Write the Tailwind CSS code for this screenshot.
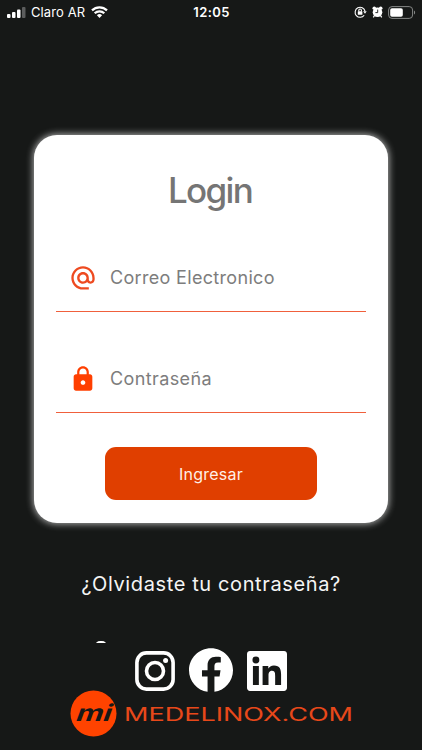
<!DOCTYPE html>
<html lang="es">
  <head>
    <meta charset="utf-8">
    <meta name="viewport" content="width=device-width, initial-scale=1.0">
    <title>Login - Medelinox</title>
    <script src="https://cdn.jsdelivr.net/npm/@tailwindcss/browser@4"></script>
  </head>

  <body class="flex h-[750px] w-[422px] flex-col overflow-hidden bg-[#161817] font-['Inter',sans-serif]">

    <!-- Status bar -->
    <header class="grid h-6 shrink-0 grid-cols-3 items-center pl-[7px] pr-[6px] text-white">
      <div class="flex items-center">
        <svg class="mr-[5px] h-[11px] w-[19px]" viewBox="0 0 19 11" fill="currentColor">
          <rect x="0" y="7" width="3.5" height="4" rx="1"/>
          <rect x="5" y="5" width="3.5" height="6" rx="1"/>
          <rect x="10" y="2.5" width="3.5" height="8.5" rx="1"/>
          <rect x="15" y="0" width="3.5" height="11" rx="1" opacity=".3"/>
        </svg>
        <span class="whitespace-nowrap text-[13px] leading-none tracking-[0.1px]">Claro AR</span>
        <svg class="ml-[6px] h-[12px] w-[17px]" viewBox="0 0 17 12" fill="none" stroke="currentColor" stroke-width="2.2">
          <path d="M1 4.4a10.7 10.7 0 0 1 15 0"/>
          <path d="M3.7 7.3a6.9 6.9 0 0 1 9.6 0"/>
          <path d="M8.5 12 5.9 9.3a3.8 3.8 0 0 1 5.2 0z" fill="currentColor" stroke="none"/>
        </svg>
      </div>
      <span class="text-center text-[13px] font-semibold leading-none tracking-[0.4px]">12:05</span>
      <div class="flex items-center justify-end">
        <svg class="mr-[5px] h-[12px] w-[13px]" viewBox="0 0 13 12" fill="none" stroke="currentColor" stroke-width="1.1">
          <path d="M10.2 9.2A5 5 0 1 1 11 5.2"/>
          <path d="m9.1 5.3 1.9 2.4 1.7-2.4z" fill="currentColor" stroke="none"/>
          <rect x="3.8" y="5.3" width="4.6" height="3.4" rx=".5" fill="currentColor" stroke="none"/>
          <path d="M4.8 5.5V4.3a1.3 1.3 0 0 1 2.6 0v1.2"/>
        </svg>
        <svg class="mr-[5px] h-[12px] w-[11px]" viewBox="0 0 11 12">
          <circle cx="2.3" cy="2.3" r="1.8" fill="#fff"/>
          <circle cx="8.7" cy="2.3" r="1.8" fill="#fff"/>
          <path d="m2.5 9.5-1.2 1.8M8.5 9.5l1.2 1.8" stroke="#fff" stroke-width="1.3"/>
          <circle cx="5.5" cy="6.3" r="4.8" fill="#fff"/>
          <path d="M5.7 3.6v3H3.4" fill="none" stroke="#161817" stroke-width=".9"/>
        </svg>
        <svg class="h-[13px] w-[28px]" viewBox="0 0 28 13">
          <rect x=".6" y=".6" width="24" height="11.8" rx="3.4" fill="none" stroke="#858786" stroke-width="1"/>
          <rect x="2.2" y="2.2" width="12.6" height="8.6" rx="1.8" fill="#fff"/>
          <path d="M26 4.5c1.5.6 1.5 3.4 0 4z" fill="#858786"/>
        </svg>
      </div>
    </header>

    <!-- Login card -->
    <main class="mx-[34px] mt-[111px] flex h-[388px] shrink-0 flex-col rounded-[23px] bg-white px-[22px] shadow-[0_0_7px_1px_rgba(255,255,255,0.65)]">
      <h1 class="mt-[34px] h-[43px] pr-[2px] text-center text-[35px] font-medium leading-[42px] tracking-[-1.7px] text-[#757575]">Login</h1>

      <label class="mt-[30px] flex h-[70px] items-center border-b border-[#f0603c] pl-[13px] pt-[2px]">
        <svg class="size-7" viewBox="0 0 24 24" fill="#ee4a20">
          <path d="M12 1.95c-5.52 0-10 4.48-10 10s4.48 10 10 10h5v-2h-5c-4.34 0-8-3.66-8-8s3.66-8 8-8 8 3.66 8 8v1.43c0 .79-.71 1.57-1.5 1.57s-1.5-.78-1.5-1.57v-1.43c0-2.76-2.24-5-5-5s-5 2.24-5 5 2.24 5 5 5c1.38 0 2.64-.56 3.54-1.47.65.89 1.77 1.47 2.96 1.47 1.97 0 3.5-1.6 3.5-3.57v-1.43c0-5.52-4.48-10-10-10zm0 13c-1.66 0-3-1.34-3-3s1.34-3 3-3 3 1.34 3 3-1.34 3-3 3z"/>
        </svg>
        <span class="ml-[13px] text-[18px] leading-6 tracking-[0.32px] text-[#7d7d7d]">Correo Electronico</span>
      </label>

      <label class="mt-[31px] flex h-[70px] items-center border-b border-[#f0603c] pl-[13px] pt-[2px]">
        <svg class="size-7" viewBox="0 0 24 24" fill="#ff3f00">
          <path d="M18 8h-1V6c0-2.76-2.24-5-5-5S7 3.24 7 6v2H6c-1.1 0-2 .9-2 2v10c0 1.1.9 2 2 2h12c1.1 0 2-.9 2-2V10c0-1.1-.9-2-2-2zm-6 9c-1.1 0-2-.9-2-2s.9-2 2-2 2 .9 2 2-.9 2-2 2zm3.1-9H8.9V6c0-1.71 1.39-3.1 3.1-3.1 1.71 0 3.1 1.39 3.1 3.1v2z"/>
        </svg>
        <span class="ml-[13px] text-[18px] leading-6 tracking-[0.38px] text-[#7d7d7d]">Contraseña</span>
      </label>

      <button class="mx-auto mt-[34px] h-[53px] w-[212px] rounded-[11px] bg-[#e03f00] text-[16px] tracking-[0.25px] text-[#fff0e8]">Ingresar</button>
    </main>

    <a class="mt-[47px] h-[29px] shrink-0 whitespace-nowrap text-center text-[20px] leading-[29px] tracking-[0.62px] text-[#f5f5f5]" href="#">¿Olvidaste tu contraseña?</a>

    <div class="ml-[95px] mt-[42px] h-[2px] w-[12px] shrink-0 overflow-hidden">
      <div class="h-[10px] w-[12px] rounded-full bg-white"></div>
    </div>

    <footer class="mt-[5px] flex shrink-0 flex-col">
      <div class="flex h-[44px] items-center gap-[14px] pl-[135px]">
        <svg class="mt-[2px] size-10" viewBox="0 0 40 40" fill="none" stroke="#fff">
          <rect x="1.9" y="1.9" width="36.2" height="36.2" rx="9.5" stroke-width="3.6"/>
          <circle cx="20" cy="20" r="8.5" stroke-width="3.6"/>
          <circle cx="30.6" cy="9.4" r="2.5" fill="#fff" stroke="none"/>
        </svg>
        <svg class="size-11" viewBox="0 0 24 24" fill="#fff">
          <path d="M24 12.073c0-6.627-5.373-12-12-12s-12 5.373-12 12c0 5.99 4.388 10.954 10.125 11.854v-8.385H7.078v-3.47h3.047V9.43c0-3.007 1.792-4.669 4.533-4.669 1.312 0 2.686.235 2.686.235v2.953H15.83c-1.491 0-1.956.925-1.956 1.874v2.25h3.328l-.532 3.47h-2.796v8.385C19.612 23.027 24 18.062 24 12.073z"/>
        </svg>
        <svg class="mt-[2px] size-10" viewBox="0 0 24 24" fill="#fff">
          <path d="M20.447 20.452h-3.554v-5.569c0-1.328-.027-3.037-1.852-3.037-1.853 0-2.136 1.445-2.136 2.939v5.667H9.351V9h3.414v1.561h.046c.477-.9 1.637-1.85 3.37-1.85 3.601 0 4.267 2.37 4.267 5.455v6.286zM5.337 7.433a2.062 2.062 0 0 1-2.063-2.065 2.064 2.064 0 1 1 2.063 2.065zm1.782 13.019H3.555V9h3.564v11.452zM22.225 0H1.771C.792 0 0 .774 0 1.729v20.542C0 23.227.792 24 1.771 24h20.451C23.2 24 24 23.227 24 22.271V1.729C24 .774 23.2 0 22.222 0h.003z"/>
        </svg>
      </div>

      <!-- Brand -->
      <svg class="-mt-[2px] ml-[70px] h-[47px] w-[284px]" viewBox="0 0 284 47">
        <circle cx="23.5" cy="23.5" r="23" fill="#ff4300"/>
        <text transform="translate(4.5 31) skewX(-20)" font-size="23" font-weight="700" textLength="35" lengthAdjust="spacingAndGlyphs" fill="#161817">mi</text>
        <text x="54" y="30.5" font-size="18" textLength="229" lengthAdjust="spacingAndGlyphs" fill="#e8481a">MEDELINOX.COM</text>
      </svg>
    </footer>
  </body>
</html>
